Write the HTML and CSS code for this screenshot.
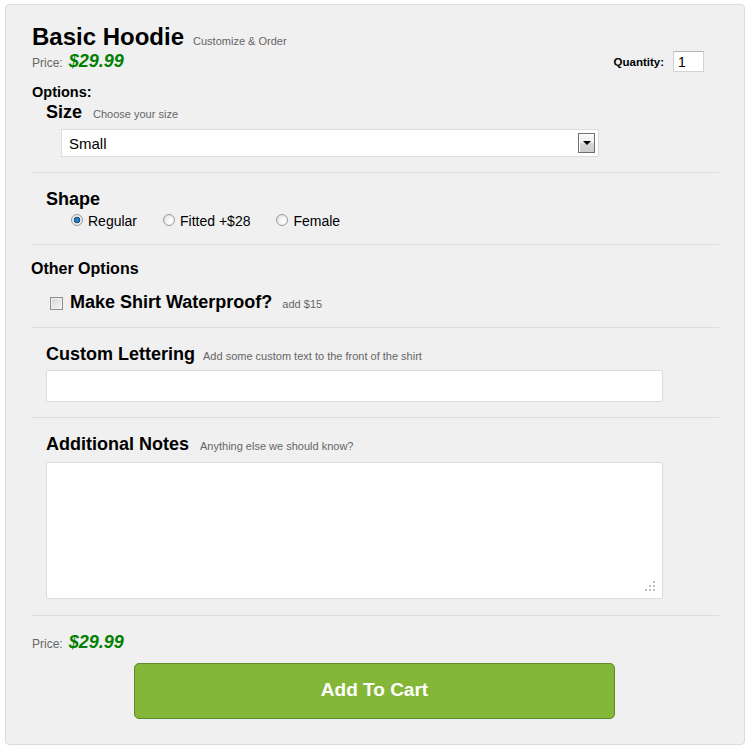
FILE: index.html
```html
<!DOCTYPE html>
<html lang="en">
<head>
<meta charset="utf-8">
<title>Basic Hoodie</title>
<link rel="stylesheet" href="styles.css">
</head>
<body>
<form class="panel">
  <h1 class="title">Basic Hoodie<span class="title-sub">Customize &amp; Order</span></h1>
  <div class="price-row">
    <div class="price price-top"><span class="price-label">Price:</span><span class="price-value">$29.99</span></div>
    <label class="qty"><span class="qty-label">Quantity:</span><input class="qty-input" type="text" value="1"></label>
  </div>

  <div class="options-label">Options:</div>
  <div class="block block-size">
    <div class="heading">Size<span class="hint">Choose your size</span></div>
    <div class="select-wrap">
      <select class="select"><option>Small</option><option>Medium</option><option>Large</option></select>
      <span class="select-btn"><span class="select-arrow"></span></span>
    </div>
  </div>

  <div class="block sep block-shape">
    <div class="heading">Shape</div>
    <div class="radios">
      <label class="radio-item"><input class="radio" type="radio" name="shape" checked><span>Regular</span></label>
      <label class="radio-item"><input class="radio" type="radio" name="shape"><span>Fitted +$28</span></label>
      <label class="radio-item"><input class="radio" type="radio" name="shape"><span>Female</span></label>
    </div>
  </div>

  <div class="block sep block-other">
    <div class="other-label">Other Options</div>
    <label class="check-row"><input class="check" type="checkbox"><span class="heading-inline">Make Shirt Waterproof?</span><span class="hint hint-check">add $15</span></label>
  </div>

  <div class="block sep block-letter">
    <div class="heading">Custom Lettering<span class="hint hint-tight">Add some custom text to the front of the shirt</span></div>
    <input class="text-input" type="text">
  </div>

  <div class="block sep block-notes">
    <div class="heading">Additional Notes<span class="hint">Anything else we should know?</span></div>
    <div class="notes-wrap">
      <textarea class="notes"></textarea>
      <svg class="grip" width="10" height="10" viewBox="0 0 10 10"><rect x="8" y="0" width="2" height="2"/><rect x="4" y="4" width="2" height="2"/><rect x="8" y="4" width="2" height="2"/><rect x="0" y="8" width="2" height="2"/><rect x="4" y="8" width="2" height="2"/><rect x="8" y="8" width="2" height="2"/></svg>
    </div>
  </div>

  <div class="block sep block-total">
    <div class="price"><span class="price-label">Price:</span><span class="price-value">$29.99</span></div>
    <div class="cart-row"><button class="cart-btn" type="button">Add To Cart</button></div>
  </div>
</form>
</body>
</html>
```

FILE: styles.css
```css
* { box-sizing: border-box; }
body {
  margin: 0;
  font-family: "Liberation Sans", Arial, sans-serif;
  color: #000;
  background: #fff;
}
.panel {
  margin: 4px 0 0 5px;
  width: 740px;
  height: 741px;
  border: 1px solid #dcdcdc;
  border-radius: 4px;
  background: #f0f0f0;
  padding: 18px 25px 0 25px;
}
.title {
  margin: 0;
  font-size: 24px;
  line-height: 28px;
  font-weight: bold;
  padding-left: 1px;
}
.title-sub {
  font-size: 11px;
  line-height: 1;
  font-weight: normal;
  color: #666;
  margin-left: 9px;
}
.price-row {
  display: flex;
  justify-content: space-between;
  align-items: flex-start;
}
.price {
  line-height: 18px;
  padding-left: 1px;
}
.price-top { padding-top: 1px; }
.price-label {
  font-size: 12px;
  line-height: 1;
  color: #666;
}
.price-value {
  font-size: 18px;
  font-weight: bold;
  font-style: italic;
  color: #008000;
  margin-left: 6px;
}
.qty {
  display: flex;
  align-items: center;
  margin-right: 15px;
}
.qty-label {
  font-size: 11.5px;
  line-height: 13px;
  font-weight: bold;
  position: relative;
  top: 1px;
}
.qty-input {
  margin: 0 0 0 9px;
  width: 31px;
  height: 21px;
  border: 1px solid #d2d2d2;
  border-top-color: #b4b4b4;
  background: #fff;
  font-family: "Liberation Sans", Arial, sans-serif;
  font-size: 14px;
  padding: 0 4px;
  color: #000;
}
.options-label {
  margin-top: 12px;
  font-size: 14.5px;
  line-height: 17px;
  font-weight: bold;
  padding-left: 1px;
}
.block { padding-bottom: 14px; }
.sep {
  border-top: 1px solid #dcdcdc;
  padding-top: 15px;
}
.heading {
  font-size: 18px;
  line-height: 22px;
  font-weight: bold;
  padding-left: 15px;
}
.hint {
  font-size: 11px;
  line-height: 1;
  font-weight: normal;
  color: #666;
  margin-left: 11px;
}
.hint-tight { margin-left: 8px; }
.block-size { padding-bottom: 15px; }
.select-wrap {
  position: relative;
  margin: 6px 0 0 30px;
  width: 538px;
  height: 28px;
}
.select {
  appearance: none;
  -webkit-appearance: none;
  width: 100%;
  height: 100%;
  margin: 0;
  border: 1px solid #dcdcdc;
  border-radius: 0;
  background: #fff;
  font-family: "Liberation Sans", Arial, sans-serif;
  font-size: 15px;
  padding: 0 0 0 7px;
  color: #000;
}
.select-btn {
  position: absolute;
  right: 4px;
  top: 4px;
  width: 17px;
  height: 20px;
  border: 1px solid #6f6f6f;
  background: linear-gradient(#f7f7f7 0, #f3f3f3 45%, #d6d6d6 55%, #cdcdcd 100%);
  box-shadow: inset 1px 1px 0 #fff;
  pointer-events: none;
}
.select-arrow {
  position: absolute;
  left: 4px;
  top: 7px;
  width: 0;
  height: 0;
  border-left: 4px solid transparent;
  border-right: 4px solid transparent;
  border-top: 4px solid #000;
}
.block-shape { padding-bottom: 14px; }
.radios {
  display: flex;
  gap: 26px;
  margin-top: 2px;
  padding-left: 40px;
  font-size: 14px;
  line-height: 18px;
}
.radio-item {
  display: flex;
  align-items: center;
}
.radio {
  appearance: none;
  -webkit-appearance: none;
  margin: 0 5px 0 0;
  width: 12px;
  height: 12px;
  border-radius: 50%;
  border: 1px solid #9a9a9a;
  background: radial-gradient(circle at 65% 65%, #ffffff 0, #f4f4f4 40%, #d7d7d7 100%);
  position: relative;
  top: -1px;
}
.radio:checked {
  background: radial-gradient(circle at 50% 50%, #3a8fd0 0, #1d6aa8 2.2px, #0e4f86 3px, #e9e9e9 3.6px, #f6f6f6 100%);
}
.block-other { padding-top: 14px; }
.other-label {
  font-size: 16px;
  line-height: 20px;
  font-weight: bold;
}
.check-row {
  display: flex;
  align-items: baseline;
  margin-top: 12px;
  padding-left: 19px;
}
.check {
  appearance: none;
  -webkit-appearance: none;
  margin: 0 7px 0 0;
  width: 13px;
  height: 13px;
  border: 1px solid #8e8e8e;
  background: linear-gradient(135deg, #d5d5d5 0, #e6e6e6 50%, #f7f7f7 100%);
  box-shadow: inset 0 0 0 1px #f0f0f0;
  align-self: center;
  position: relative;
  top: 1px;
}
.heading-inline {
  font-size: 18px;
  line-height: 22px;
  font-weight: bold;
}
.hint-check { margin-left: 10px; }
.block-letter { padding-bottom: 15px; }
.text-input {
  display: block;
  margin: 5px 0 0 15px;
  width: 617px;
  height: 32px;
  border: 1px solid #dcdcdc;
  border-radius: 2px;
  background: #fff;
  font-family: "Liberation Sans", Arial, sans-serif;
  font-size: 14px;
}
.block-notes { padding-bottom: 16px; }
.notes-wrap {
  position: relative;
  margin: 7px 0 0 15px;
  width: 617px;
  height: 137px;
}
.notes {
  display: block;
  width: 100%;
  height: 100%;
  margin: 0;
  border: 1px solid #dcdcdc;
  border-radius: 2px;
  background: #fff;
  resize: none;
  font-family: "Liberation Sans", Arial, sans-serif;
  font-size: 14px;
}
.grip {
  position: absolute;
  right: 8px;
  bottom: 8px;
  fill: #bdbdbd;
}
.block-total { padding-top: 17px; }
.cart-row {
  display: flex;
  justify-content: center;
  margin-top: 11px;
  padding-right: 1px;
}
.cart-btn {
  width: 481px;
  height: 56px;
  border: 1px solid #5d8a2a;
  border-radius: 5px;
  background: #84b737;
  color: #fff;
  font-family: "Liberation Sans", Arial, sans-serif;
  font-size: 19px;
  font-weight: bold;
  cursor: pointer;
  padding: 0 0 2px 0;
}
```
